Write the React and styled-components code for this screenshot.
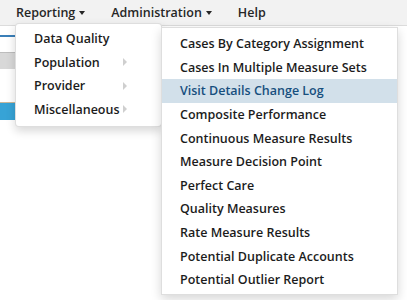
import React from 'react';
import styled, { createGlobalStyle } from 'styled-components';

const GlobalStyle = createGlobalStyle`
    html, body {
        margin: 0;
        padding: 0;
        background: #ffffff;
        font-family: "Open Sans", "Noto Sans", sans-serif;
    }
`;

const Page = styled.div`
    position: relative;
    width: 407px;
    height: 300px;
    overflow: hidden;
    background: #ffffff;
`;

const NavBar = styled.div`
    height: 26px;
    background: #f2f2f2;
    border-bottom: 1px solid #dcdcdc;
    display: flex;
    align-items: center;
    padding-left: 16px;
    gap: 26px;
    box-sizing: border-box;
`;

const NavItem = styled.div`
    font-size: 12.5px;
    font-weight: 600;
    color: #262626;
    display: flex;
    align-items: center;
    gap: 4px;
`;

const Caret = styled.span`
    width: 0;
    height: 0;
    border-left: 3.5px solid transparent;
    border-right: 3.5px solid transparent;
    border-top: 4px solid #262626;
    margin-top: 1px;
`;

const Content = styled.div`
    width: 163px;
    display: flex;
    flex-direction: column;
`;

const TabLine = styled.div`
    margin-top: 9px;
    height: 2px;
    background: #3a7fb8;
`;

const GreyRow = styled.div`
    margin-top: 15px;
    height: 16px;
    background: #d8d8d8;
    border-top: 1px solid #bdbdbd;
`;

const BlueRow = styled.div`
    margin-top: 33px;
    height: 17px;
    background: #37a3d6;
    border-top: 1px solid #c9b79a;
`;

const Menu = styled.div`
    position: absolute;
    left: ${(p) => p.$left}px;
    top: ${(p) => p.$top}px;
    width: ${(p) => p.$width}px;
    background: #ffffff;
    border: 1px solid rgba(0, 0, 0, 0.13);
    border-radius: ${(p) => (p.$round ? 4 : 0)}px;
    box-shadow: 0 4px 10px rgba(0, 0, 0, 0.16);
    padding: ${(p) => p.$padTop}px 0 ${(p) => p.$padBottom}px;
    box-sizing: border-box;
    z-index: ${(p) => p.$z || 1};
`;

const MenuItem = styled.div`
    height: ${(p) => p.$h || 23.5}px;
    display: flex;
    align-items: center;
    padding: 0 ${(p) => p.$padRight || 12}px 0 18px;
    font-size: 12.5px;
    font-weight: 600;
    white-space: nowrap;
    color: ${(p) => (p.$active ? '#174f7e' : '#1c1c1c')};
    background: ${(p) => (p.$active ? '#d2e0ea' : 'transparent')};
`;

const SubArrow = styled.span`
    margin-left: auto;
    padding-left: 3px;
    &::after {
        content: '';
        display: block;
        width: 0;
        height: 0;
        border-top: 4px solid transparent;
        border-bottom: 4px solid transparent;
        border-left: 4px solid #cfcfcf;
    }
`;

const reporting = [
    { label: 'Data Quality' },
    { label: 'Population', sub: true },
    { label: 'Provider', sub: true },
    { label: 'Miscellaneous', sub: true },
];

const reports = [
    'Cases By Category Assignment',
    'Cases In Multiple Measure Sets',
    'Visit Details Change Log',
    'Composite Performance',
    'Continuous Measure Results',
    'Measure Decision Point',
    'Perfect Care',
    'Quality Measures',
    'Rate Measure Results',
    'Potential Duplicate Accounts',
    'Potential Outlier Report',
];

const App = () => {
    return (
        <Page>
            <GlobalStyle />
            <NavBar>
                <NavItem>Reporting<Caret /></NavItem>
                <NavItem>Administration<Caret /></NavItem>
                <NavItem>Help</NavItem>
            </NavBar>
            <Content>
                <TabLine />
                <GreyRow />
                <BlueRow />
            </Content>
            <Menu $left={15} $top={23} $width={147} $padTop={3} $padBottom={5} $round>
                {reporting.map((item) => (
                    <MenuItem key={item.label} $padRight={34}>
                        {item.label}
                        {item.sub && <SubArrow />}
                    </MenuItem>
                ))}
            </Menu>
            <Menu $left={161} $top={27} $width={237} $padTop={4} $padBottom={2} $z={2}>
                {reports.map((label) => (
                    <MenuItem key={label} $h={23.6} $active={label === 'Visit Details Change Log'}>
                        {label}
                    </MenuItem>
                ))}
            </Menu>
        </Page>
    );
};

export default App;
